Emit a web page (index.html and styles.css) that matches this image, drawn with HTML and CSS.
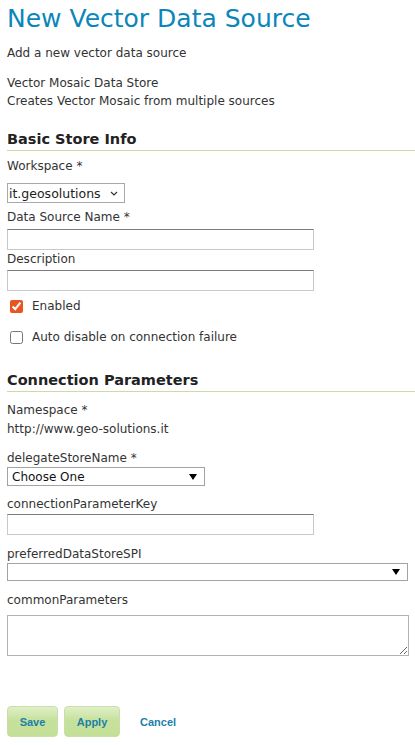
FILE: index.html
```html
<!DOCTYPE html>
<html lang="en">
<head>
<meta charset="utf-8">
<title>New Vector Data Source</title>
<link rel="stylesheet" href="styles.css">
</head>
<body>
<div class="page">
  <h1 class="title">New Vector Data Source</h1>
  <p class="intro">Add a new vector data source</p>
  <p class="store-type">Vector Mosaic Data Store<br>Creates Vector Mosaic from multiple sources</p>

  <h2 class="section section-basic">Basic Store Info</h2>
  <label class="lbl lbl-ws">Workspace *</label>
  <select class="sel-ws"><option>it.geosolutions</option></select>
  <label class="lbl lbl-name">Data Source Name *</label>
  <input class="txt txt-name" type="text">
  <label class="lbl lbl-desc">Description</label>
  <input class="txt txt-desc" type="text">
  <label class="check check-enabled"><input type="checkbox" checked><span>Enabled</span></label>
  <label class="check check-auto"><input type="checkbox"><span>Auto disable on connection failure</span></label>

  <h2 class="section section-conn">Connection Parameters</h2>
  <div class="lbl lbl-ns">Namespace *</div>
  <div class="ns-value">http://www.geo-solutions.it</div>
  <label class="lbl lbl-delegate">delegateStoreName *</label>
  <select class="sel-tri sel-delegate"><option>Choose One</option></select>
  <label class="lbl lbl-key">connectionParameterKey</label>
  <input class="txt txt-key" type="text">
  <label class="lbl lbl-spi">preferredDataStoreSPI</label>
  <select class="sel-tri sel-spi"><option></option></select>
  <label class="lbl lbl-common">commonParameters</label>
  <textarea class="area"></textarea>

  <div class="buttons">
    <button class="btn btn-save">Save</button>
    <button class="btn btn-apply">Apply</button>
    <a class="cancel">Cancel</a>
  </div>
</div>
</body>
</html>
```
FILE: styles.css
```css
html, body {
  margin: 0;
  padding: 0;
  background: #ffffff;
}
body {
  font-family: "DejaVu Sans", "Liberation Sans", sans-serif;
  font-size: 12px;
  color: #333333;
}
.page {
  display: flex;
  flex-direction: column;
  align-items: flex-start;
  padding: 0 0 0 7px;
}
.title {
  margin: 5px 0 0;
  font-size: 25px;
  line-height: 28px;
  font-weight: normal;
  color: #0b86bb;
}
.intro {
  margin: 11px 0 0;
  line-height: 18px;
}
.store-type {
  margin: 12px 0 0;
  line-height: 18px;
}
.section {
  align-self: stretch;
  margin: 20px 0 0;
  padding: 0 0 2px;
  font-size: 14.5px;
  line-height: 18px;
  font-weight: bold;
  color: #222222;
  border-bottom: 1px solid #c9dca6;
}
.section-conn { margin-top: 25px; }
.lbl {
  display: block;
  line-height: 18px;
}
.lbl-ws { margin-top: 6px; }
.sel-ws {
  box-sizing: border-box;
  margin-top: 8px;
  width: 118px;
  height: 20px;
  padding: 0 0 0 1px;
  font-family: "DejaVu Sans", sans-serif;
  font-size: 12.5px;
  color: #222;
  border: 1px solid #a9a9a9;
  border-radius: 0;
  background: #fff url("data:image/svg+xml,%3Csvg xmlns='http://www.w3.org/2000/svg' width='8' height='5'%3E%3Cpath d='M1 1l3 3 3-3' fill='none' stroke='%23333' stroke-width='1.2'/%3E%3C/svg%3E") no-repeat right 6px center;
  -webkit-appearance: none;
  appearance: none;
}
.lbl-name { margin-top: 5px; }
.txt {
  box-sizing: border-box;
  width: 307px;
  height: 21px;
  margin: 3px 0 0;
  padding: 0 3px;
  border: 1px solid #c9c9c9;
  border-top-color: #7c7c7c;
  border-radius: 0;
  font-family: "DejaVu Sans", sans-serif;
  font-size: 12px;
  outline: none;
}
.lbl-desc { margin-top: 0; }
.txt-desc { margin-top: 2px; }
.check {
  display: flex;
  align-items: center;
  gap: 9px;
  line-height: 18px;
  margin-left: 3px;
}
.check input {
  width: 13px;
  height: 13px;
  margin: 0;
  accent-color: #e95420;
}
.check-enabled { margin-top: 6px; }
.check-auto { margin-top: 13px; }
.lbl-ns { margin-top: 9px; }
.ns-value {
  margin-top: 1px;
  line-height: 18px;
}
.lbl-delegate { margin-top: 11px; }
.sel-tri {
  box-sizing: border-box;
  height: 19px;
  margin: 0;
  padding: 0 0 0 4px;
  font-family: "DejaVu Sans", sans-serif;
  font-size: 12px;
  color: #111;
  border: 1px solid #a3a3a3;
  border-radius: 0;
  background: #fff url("data:image/svg+xml,%3Csvg xmlns='http://www.w3.org/2000/svg' width='8' height='6'%3E%3Cpath d='M0 0h8L4 6z' fill='%23000'/%3E%3C/svg%3E") no-repeat right 7px center;
  -webkit-appearance: none;
  appearance: none;
}
.sel-delegate { width: 198px; }
.lbl-key { margin-top: 9px; }
.txt-key { margin-top: 1px; }
.lbl-spi { margin-top: 10px; }
.sel-spi { width: 401px; height: 18px; }
.lbl-common { margin-top: 10px; }
.area {
  box-sizing: border-box;
  width: 402px;
  height: 41px;
  margin: 6px 0 0;
  border: 1px solid #b3b3b3;
  border-radius: 0;
  font-family: "DejaVu Sans", sans-serif;
  font-size: 12px;
}
.buttons {
  display: flex;
  align-items: center;
  gap: 6px;
  margin-top: 50px;
}
.btn {
  height: 31px;
  padding: 0;
  border: 1px solid #c8dfa6;
  border-radius: 4px;
  background: linear-gradient(#e0efc9, #c6e19c 45%, #c3df97);
  font-family: "Liberation Sans", Arial, sans-serif;
  font-size: 11px;
  font-weight: bold;
  color: #1b7fa9;
}
.btn-save { width: 51px; }
.btn-apply { width: 56px; }
.cancel {
  margin-left: 14px;
  font-family: "Liberation Sans", Arial, sans-serif;
  font-size: 11px;
  font-weight: bold;
  color: #1b7fa9;
}
```
